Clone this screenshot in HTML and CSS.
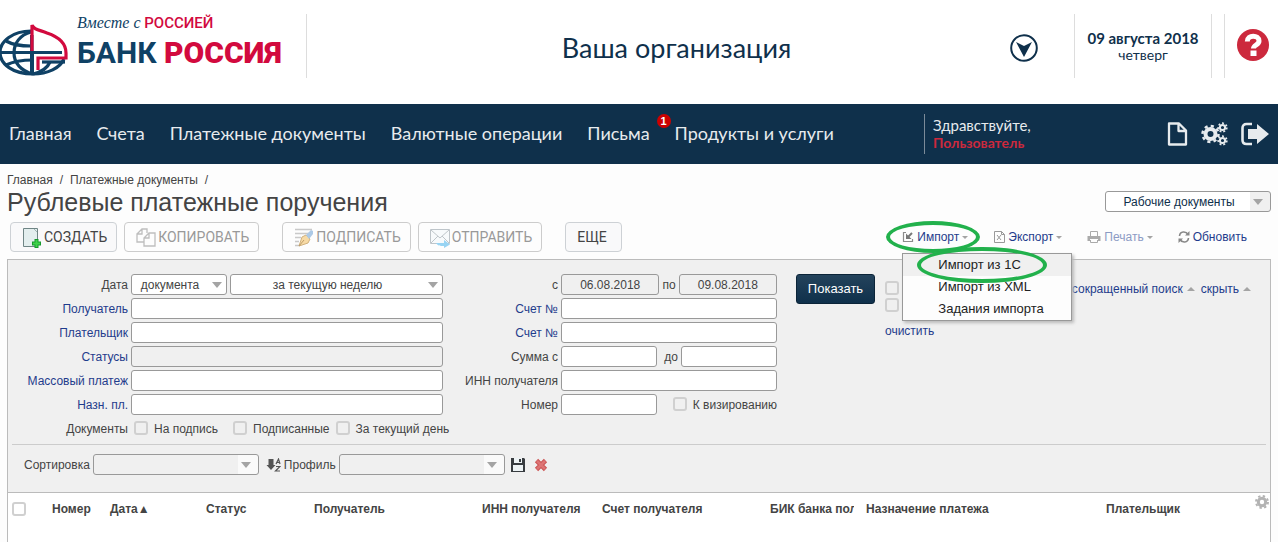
FILE: index.html
```html
<!DOCTYPE html>
<html lang="ru">
<head>
<meta charset="utf-8">
<title>Рублевые платежные поручения</title>
<link rel="stylesheet" href="styles.css">
</head>
<body>
<header class="top">
  <a class="logo" href="#">
    <svg class="globe" viewBox="0 0 68 54" width="68" height="54" aria-hidden="true">
      <g fill="none" stroke="#0f4165" stroke-width="3.200">
        <path d="M31 8C13 8 0 18 0 29.500S13 51 33 51c15 0 27-6 31-15"/>
        <path d="M31 9C20 12 14 20 14 30s7 18 19 21M6 18c7 4 16 5 25 5M6 42c8-4 17-5 27-5M33 51c9-2 14-5 17-12"/>
        <path d="M32 12v39" stroke-width="4"/>
        <path d="M42 39h23"/>
      </g>
      <path d="M33.500 8c12 1 28 6 30 21H33.500z" fill="#fff"/>
      <path d="M32 30V2c2 5 8 5 15 8 12 4 19 10 19 20v5H38v12" fill="none" stroke="#d20a3e" stroke-width="3.200"/>
      <path d="M0 29.500h62" stroke="#0f4165" stroke-width="3"/>
    </svg>
    <span class="brand">
      <span class="motto"><i>Вместе с</i> <b>РОССИЕЙ</b></span>
      <span class="bank">БАНК <b>РОССИЯ</b></span>
    </span>
  </a>
  <div class="org">Ваша организация</div>
  <button class="plain chooser" aria-label="Выбрать организацию">
    <svg viewBox="0 0 28 28" width="28" height="28"><circle cx="14" cy="14" r="12.800" fill="none" stroke="#0f304b" stroke-width="2"/><path d="M6 8l8 4 8-4-8 15z" fill="#0f304b"/></svg>
  </button>
  <div class="date"><b>09 августа 2018</b><span>четверг</span></div>
  <div class="help">
    <button class="plain" aria-label="Справка">
      <svg viewBox="0 0 32 32" width="32" height="32"><circle cx="16" cy="16" r="16" fill="#cc293d"/><path d="M10.300 12.500C10.300 5.500 22 5.500 22 12c0 4-5.500 4-5.500 7.500" fill="none" stroke="#fff" stroke-width="5"/><path d="M13.500 21.500h6V27h-6z" fill="#fff"/></svg>
    </button>
  </div>
</header>

<nav class="nav">
  <div class="links">
    <a href="#">Главная</a><a href="#">Счета</a><a href="#">Платежные документы</a><a href="#">Валютные операции</a><a href="#" class="mail">Письма<span class="badge">1</span></a><a href="#">Продукты и услуги</a>
  </div>
  <div class="user"><span>Здравствуйте,</span><b>Пользователь</b></div>
  <div class="tools">
    <button class="plain" aria-label="Документ"><svg viewBox="0 0 22 24" width="22" height="24"><path d="M3 1.500h10l7 7v14H3zM12.500 2v7H20" fill="none" stroke="#e7ebee" stroke-width="2.300" stroke-linejoin="round"/></svg></button>
    <button class="plain" aria-label="Настройки"><svg viewBox="0 0 28 24" width="28" height="24"><g fill="none" stroke="#e7ebee"><circle cx="10.500" cy="12" r="5" stroke-width="4"/><circle cx="10.500" cy="12" r="8" stroke-width="2.500" stroke-dasharray="3.140 3.140"/><circle cx="22.500" cy="5.500" r="2.600" stroke-width="2"/><circle cx="22.500" cy="5.500" r="4.300" stroke-width="1.700" stroke-dasharray="1.930 1.930"/><circle cx="22.500" cy="18.500" r="2.600" stroke-width="2"/><circle cx="22.500" cy="18.500" r="4.300" stroke-width="1.700" stroke-dasharray="1.930 1.930"/></g></svg></button>
    <button class="plain" aria-label="Выход"><svg viewBox="0 0 30 24" width="30" height="24"><path d="M12 2H6.500C4 2 2.500 3.500 2.500 6v12c0 2.500 1.500 4 4 4H12" fill="none" stroke="#e7ebee" stroke-width="2.600"/><path d="M8 7h9V2l12 10-12 10v-5H8z" fill="#e7ebee"/></svg></button>
  </div>
</nav>

<main class="page">
  <div class="crumbs"><a href="#">Главная</a><span>/</span><a href="#">Платежные документы</a><span>/</span></div>
  <div class="heading">
    <h1>Рублевые платежные поручения</h1>
    <span class="pick scope"><select aria-label="Набор документов"><option>Рабочие документы</option></select></span>
  </div>

  <div class="actions">
    <button class="act">
      <svg viewBox="0 0 20 21" width="20" height="21"><path d="M1.500 1.500h14v18h-14z" fill="#e3eeee" stroke="#6f8585"/><path d="M12 2l3 3" stroke="#9fb3b3"/><path d="M10 16.500h9M14.500 12v9" stroke="#169a2c" stroke-width="4"/><path d="M11 16.500h7M14.500 13v7" stroke="#3fd14a" stroke-width="2"/></svg>СОЗДАТЬ</button>
    <button class="act off">
      <svg viewBox="0 0 20 21" width="20" height="21"><path d="M1 7l5-5h5v4M6 2v5H1v8h7M8 11l5-5h6v13H8zM13 6v5H8" fill="none" stroke="#b4b4b4" stroke-width="1.300"/></svg>КОПИРОВАТЬ</button>
    <button class="act off sign">
      <svg viewBox="0 0 20 21" width="20" height="21"><path d="M1 2.500h17M1 6.500h15M1 10.500h6M1 14.500h4M1 18.500h5" stroke="#c0c0c0" stroke-width="1.300"/><path d="M5 19l3-9 4-2 4 4-2 4z" fill="#f6d596" stroke="#c9a468"/><path d="M12 8l5-5 2 1v3l-4 5z" fill="#9fc0e2"/><path d="M5 19l5-6" stroke="#b38b50"/></svg>ПОДПИСАТЬ</button>
    <button class="act off">
      <svg viewBox="0 0 20 21" width="20" height="21"><path d="M.5 2.500h19v14H.5z" fill="#f7fafc" stroke="#b4bcc2"/><path d="M1 3l9 8 9-8M1 16l7-7M19 16l-7-7" fill="none" stroke="#b4bcc2"/><path d="M6 16h8v-3l6 4.500-6 3.500v-2c-4 0-6 0-8-3z" fill="#87cdf2"/></svg>ОТПРАВИТЬ</button>
    <button class="act more">ЕЩЕ</button>
    <div class="links-right">
      <div class="import">
        <button class="plain lnk" aria-expanded="true"><svg viewBox="0 0 12 12" width="12" height="12"><path d="M4 1.500H1.500v9h9V8" fill="none" stroke="#8c8c8c" stroke-width="1.200"/><path d="M4 2.500V8h5.500z" fill="#777"/><path d="M6 6l4-4" stroke="#777" stroke-width="2"/></svg>Импорт<i class="dn"></i></button>
        <span class="ring ring-link"></span>
        <ul class="menu">
          <li class="on"><a href="#">Импорт из 1С</a></li>
          <li><a href="#">Импорт из XML</a></li>
          <li><a href="#">Задания импорта</a></li>
        </ul>
        <span class="ring ring-item"></span>
      </div>
      <button class="plain lnk"><svg viewBox="0 0 12 12" width="12" height="12"><path d="M1.500.5h7l3 3v8h-10zM8.500.5v3h3M4 4l4 5M8 4L4 9" fill="none" stroke="#999"/></svg>Экспорт<i class="dn"></i></button>
      <button class="plain lnk pale"><svg viewBox="0 0 14 12" width="14" height="12"><path d="M3.500 5V.5h7V5M3.500 9v2.500h7V9" fill="none" stroke="#aaa"/><path d="M.5 5h13v5H11V8H3v2H.5z" fill="#aaa"/></svg>Печать<i class="dn"></i></button>
      <button class="plain lnk"><svg viewBox="0 0 12 12" width="12" height="12"><path d="M1.500 5C2 0 8 0 10 3.500M10.500 7C10 12 4 12 2 8.500" fill="none" stroke="#888" stroke-width="1.600"/><path d="M11.500 0v4.500H7zM.5 12V7.500H5z" fill="#888"/></svg>Обновить</button>
    </div>
  </div>

  <section class="panel">
    <form class="filter">
      <div class="cols">
        <div class="grid left">
          <label for="dk">Дата</label>
          <div class="row"><span class="pick kind"><select id="dk"><option>документа</option></select></span><span class="pick period"><select aria-label="Период"><option>за текущую неделю</option></select></span></div>
          <label class="ref" for="rcv">Получатель</label><input id="rcv" type="text">
          <label class="ref" for="pay">Плательщик</label><input id="pay" type="text">
          <label class="ref" for="sts">Статусы</label><input id="sts" type="text" class="dim">
          <label class="ref" for="mass">Массовый платеж</label><input id="mass" type="text">
          <label class="ref" for="naz">Назн. пл.</label><input id="naz" type="text">
          <span class="lab">Документы</span>
          <div class="row checks">
            <label class="c1"><input type="checkbox">На подпись</label><label><input type="checkbox">Подписанные</label><label><input type="checkbox">За текущий день</label>
          </div>
        </div>
        <div class="grid right">
          <label for="d1">с</label>
          <div class="row"><input id="d1" type="text" class="dim" value="06.08.2018"><label for="d2">по</label><input id="d2" type="text" class="dim" value="09.08.2018"></div>
          <label class="ref" for="a1">Счет №</label><input id="a1" type="text">
          <label class="ref" for="a2">Счет №</label><input id="a2" type="text">
          <label for="s1">Сумма с</label>
          <div class="row sum"><input id="s1" type="text"><label for="s2">до</label><input id="s2" type="text"></div>
          <label for="inn">ИНН получателя</label><input id="inn" type="text">
          <label for="num">Номер</label>
          <div class="row num"><input id="num" type="text"><label class="chk"><input type="checkbox">К визированию</label></div>
        </div>
        <button type="button" class="show">Показать</button>
        <div class="extra">
          <input type="checkbox" aria-label="Параметр 1"><input type="checkbox" aria-label="Параметр 2">
          <a href="#">очистить</a>
        </div>
        <div class="fold"><a href="#">сокращенный поиск<i class="up"></i></a><a href="#">скрыть<i class="up"></i></a></div>
      </div>
      <div class="sort">
        <label for="srt">Сортировка</label><span class="pick wide"><select id="srt"><option></option></select></span>
        <button type="button" class="plain az" aria-label="Сортировать"><svg viewBox="0 0 15 14" width="15" height="14"><path d="M2.500 1h5v6h2L5 12 .5 7h2z" fill="#555"/><path d="M10 6l2.500-5 1.500 5M10.500 4.500h3M10 8.500h4L9.500 13H14" fill="none" stroke="#555" stroke-width="1.200"/></svg></button>
        <label for="prf">Профиль</label><span class="pick wide"><select id="prf"><option></option></select></span>
        <button type="button" class="plain save" aria-label="Сохранить"><svg viewBox="0 0 14 14" width="14" height="14"><path d="M0 0h13l1 1v13H0z" fill="#383c40"/><path d="M3 0h8v5H3zM2 7h10v6H2z" fill="#edf3f5"/><path d="M8 1h2v3H8z" fill="#383c40"/></svg></button>
        <button type="button" class="plain" aria-label="Удалить"><svg viewBox="0 0 14 14" width="14" height="14"><path d="M2.500 2.500l9 9M11.500 2.500l-9 9" stroke="#c55" stroke-width="4.600"/><path d="M3 3l8 8M11 3l-8 8" stroke="#dd7474" stroke-width="2.500"/></svg></button>
      </div>
    </form>
    <div class="list">
      <table>
        <colgroup><col class="w-chk"><col class="w-num"><col class="w-date"><col class="w-stat"><col class="w-rcv"><col class="w-inn"><col class="w-rcv"><col class="w-bik"><col class="w-naz"><col></colgroup>
        <thead><tr>
          <th><input type="checkbox" aria-label="Выбрать все"></th><th>Номер</th><th>Дата▲</th><th>Статус</th><th>Получатель</th><th>ИНН получателя</th><th>Счет получателя</th><th><div class="cut">БИК банка пол</div></th><th>Назначение платежа</th><th>Плательщик</th>
        </tr></thead>
      </table>
      <button class="plain gear" aria-label="Настройка столбцов"><svg viewBox="0 0 14 14" width="14" height="14"><circle cx="7" cy="7" r="3.700" fill="none" stroke="#b3b3b3" stroke-width="3"/><circle cx="7" cy="7" r="6" fill="none" stroke="#b3b3b3" stroke-width="2" stroke-dasharray="2.360 2.360"/></svg></button>
    </div>
  </section>
</main>
</body>
</html>
```
FILE: styles.css
```css
* { box-sizing: border-box; }
body {
  margin: 0;
  min-height: 100vh;
  display: flex;
  flex-direction: column;
  background: #fdfdfd;
  color: #444;
  font: 12px/16px "Liberation Sans", Arial, sans-serif;
}
a { color: inherit; text-decoration: none; }
svg { display: block; flex: none; }
button, input, select { font: inherit; color: inherit; margin: 0; }
.plain { border: 0; padding: 0; background: none; }

.top {
  display: flex;
  padding: 14px 0 26px;
  background: #fff;
  color: #0f304b;
  font-family: Lato, "Open Sans", sans-serif;
}
.logo { display: flex; width: 307px; height: 64px; border-right: 1px solid #ddd; }
.globe { margin-top: 9px; }
.brand { padding-left: 9px; font-family: Roboto, sans-serif; white-space: nowrap; }
.brand b { color: #d20a3e; }
.motto, .bank { display: block; }
.motto { line-height: 18px; font-size: 15px; }
.motto i { font-family: "Liberation Serif", serif; font-size: 16px; color: #0f4165; }
.motto b { font-weight: 500; }
.bank { padding-top: 4px; font-size: 30px; line-height: 34px; font-weight: 700; color: #0f4165; }
.org { flex: 1; padding: 4px 0 0 36px; text-align: center; font-size: 27px; line-height: 60px; }
.chooser { margin-right: 36px; padding-top: 4px; }
.date {
  width: 138px;
  padding-top: 16px;
  border: solid #ddd;
  border-width: 0 1px;
  text-align: center;
  font-size: 14px;
}
.date b { font-size: 15px; }
.date span { display: block; }
.help { width: 54px; margin-left: 12px; padding: 15px 0 0 12px; border-left: 1px solid #ddd; }

.nav {
  display: flex;
  align-items: center;
  height: 60px;
  padding: 0 8px 0 9px;
  background: #0f304b;
  color: #e7ebee;
  font-family: Lato, "Open Sans", sans-serif;
}
.links { display: flex; flex: 1; gap: 25px; padding-bottom: 2px; font-size: 18px; line-height: 22px; white-space: nowrap; }
.mail { position: relative; }
.badge {
  position: absolute;
  top: -8px;
  right: -21px;
  width: 14px;
  height: 14px;
  border-radius: 50%;
  background: #c00;
  color: #fff;
  font: bold 11px/14px "Liberation Sans", sans-serif;
  text-align: center;
}
.user { width: 242px; padding: 3px 0; padding-left: 8px; border-left: 1px solid #7b8b99; font-size: 15px; line-height: 17px; }
.user span, .user b { display: block; }
.user b { color: #cc293d; font-size: 14px; }
.tools { display: flex; gap: 12px; }

.page { flex: 1; display: flex; flex-direction: column; padding: 8px 7px 0; }
.crumbs { display: flex; gap: 7px; }
.heading { display: flex; justify-content: space-between; height: 32px; }
h1 { margin: 0; font-size: 25px; line-height: 28px; font-weight: 400; }
.pick { position: relative; display: inline-flex; height: 21px; }
.pick select {
  appearance: none;
  width: 100%;
  padding: 0 18px 0 0;
  border: 1px solid #999;
  border-radius: 3px;
  background: #fff;
  text-align: center;
  text-align-last: center;
}
.pick::after {
  content: "";
  position: absolute;
  right: 5px;
  top: 8px;
  border: 5px solid transparent;
  border-top: 6px solid #a4a4a4;
  border-bottom: 0;
  pointer-events: none;
}
.scope::after, .wide::after { right: 8px; }
.scope { width: 166px; margin-top: 3px; }
.scope select { background: linear-gradient(90deg, #fff 88%, #f0f0f0 88%); color: #0f304b; }

.actions { display: flex; align-items: center; height: 39px; padding: 0 7px 5px 3px; }
.act {
  display: flex;
  align-items: center;
  height: 30px;
  margin-right: 7px;
  padding: 0 9px 0 11px;
  gap: 2px;
  border: 1px solid #cdd1d5;
  border-radius: 4px;
  background: #f9f9fa;
  font: 14px/18px Roboto, "Liberation Sans", sans-serif;
}
.off { background: #fdfdfd; color: #999; border-color: #ccc; }
.off svg { opacity: .85; }
.act.sign { margin-left: 16px; }
.act.more { margin-left: 16px; padding: 0 14px 0 11px; }
.links-right { display: flex; flex: 1; justify-content: flex-end; padding-right: 17px; gap: 25px; color: #1f3c8c; }
.lnk { display: flex; align-items: center; gap: 3px; height: 16px; }
.pale { color: #8c9bc4; }
.dn, .up { display: inline-block; border: 3px solid transparent; }
.dn { border-top-color: #a4a4a4; border-bottom: 0; }
.up { margin-left: 4px; border-width: 0 4px 4px; border-bottom-color: #a4a4a4; vertical-align: 2px; }
.import { position: relative; }
.menu {
  position: absolute;
  z-index: 2;
  top: 24px;
  left: 0;
  width: 170px;
  margin: 0;
  padding: 0;
  list-style: none;
  border: 1px solid #999;
  background: #fdfdfd;
  box-shadow: 2px 2px 3px #bbb;
  color: #222;
  font-size: 13px;
  line-height: 22px;
}
.menu a { display: block; padding-left: 35px; }
.on { background: #f0f0f0; }
.ring { position: absolute; z-index: 3; border: 4px solid #22b14c; border-radius: 50%; pointer-events: none; }
.ring-link { left: -16px; top: -8px; width: 94px; height: 32px; }
.ring-item { left: 15px; top: 18px; width: 130px; height: 36px; }

.panel { flex: 1; display: flex; flex-direction: column; border: 1px solid #bbb; border-bottom: 0; }
.filter { padding: 14px 4px 17px; background: #f0f0f0; border-bottom: 1px solid #bbb; }
.cols { display: flex; align-items: flex-start; padding-bottom: 5px; border-bottom: 1px solid #ccc; }
.grid { display: grid; gap: 3px; grid-auto-rows: 21px; align-items: center; }
.left { grid-template-columns: 116px 312px; }
.right { grid-template-columns: 115px 216px; }
.grid > label, .lab { text-align: right; white-space: nowrap; }
.ref { color: #1f3c8c; }
input[type="text"] {
  width: 100%;
  min-width: 0;
  height: 21px;
  padding: 0;
  border: 1px solid #999;
  border-radius: 3px;
  background: #fff;
  text-align: center;
}
input[type="text"].dim { background: #f0f0f0; }
input[type="checkbox"] {
  appearance: none;
  flex: none;
  width: 14px;
  height: 14px;
  border: 2px solid #d0d0d0;
  border-radius: 3px;
}
.row { display: flex; align-items: center; gap: 3px; }
.kind { width: 96px; }
.period { flex: 1; }
.row .dim { flex: 1; }
.sum label { padding-left: 4px; }
.sum input { flex: 1; }
.num input[type="text"] { width: 96px; }
.chk { display: flex; margin-left: auto; gap: 6px; white-space: nowrap; }
.checks { gap: 6px; padding-left: 3px; white-space: nowrap; }
.checks label { display: flex; gap: 6px; }
.checks .c1 { margin-right: 9px; }
.show {
  width: 79px;
  height: 30px;
  margin-left: 19px;
  padding: 0;
  border: 1px solid #0b2438;
  border-radius: 3px;
  background: linear-gradient(#24435c, #0f304b);
  color: #fff;
  font-size: 13px;
}
.extra { display: grid; gap: 3px; padding: 7px 0 0 10px; color: #1f3c8c; }
.extra a { padding-top: 8px; }
.fold { display: flex; flex: 1; justify-content: flex-end; gap: 6px; padding: 7px 15px 0 0; color: #1f3c8c; white-space: nowrap; }
.sort { display: flex; align-items: center; gap: 3px; padding: 9px 0 0 12px; }
.wide { width: 166px; }
.wide select { background: linear-gradient(90deg, #f0f0f0 88%, #fafafa 88%); }
.az { margin-left: 4px; }
.save { margin: 0 6px 0 3px; }
.list { flex: 1; display: flex; align-items: flex-start; padding-right: 1px; background: #fff; }
table { flex: 1; width: 100%; table-layout: fixed; border-collapse: collapse; }
th { height: 32px; padding: 0; text-align: left; white-space: nowrap; }
th input { display: block; }
th:first-child { padding-left: 4px; }
.cut { width: 84px; overflow: hidden; }
.w-chk { width: 44px; }
.w-num { width: 58px; }
.w-date { width: 96px; }
.w-stat { width: 108px; }
.w-rcv { width: 168px; }
.w-inn { width: 120px; }
.w-bik { width: 96px; }
.w-naz { width: 240px; }
.gear { padding-top: 2px; }
```
